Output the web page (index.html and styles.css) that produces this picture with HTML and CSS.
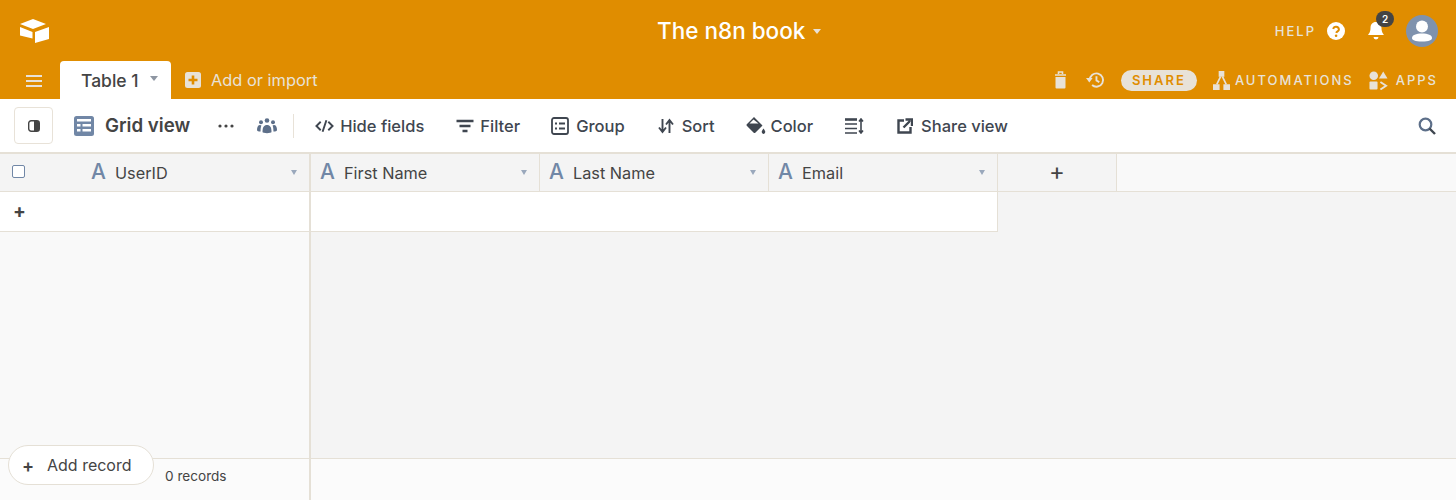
FILE: index.html
```html
<!DOCTYPE html>
<html lang="en">
  <head>
    <meta charset="UTF-8" />
    <meta name="viewport" content="width=device-width, initial-scale=1.0" />
    <title>The n8n book: Table 1</title>
    <link rel="stylesheet" href="styles.css">
  </head>
  <body>
    <div class="app">
      <header class="topbar">
        <div class="top-row">
          <svg class="logo" viewBox="0 0 30 24"><path d="M14 0 27 5 14 10 1 5Z M1 8 13.500 13V19.500L1 16.500Z M30 8V20L16 24V13Z" fill="#fff"/></svg>
          <div class="base-title">The n8n book<span class="caret caret-title"></span></div>
          <div class="top-actions">
            <span class="caps help">HELP</span>
            <svg class="icon-help" viewBox="0 0 18 18"><circle cx="9" cy="9" r="9" fill="#fff"/><path d="M6.200 7a2.900 2.900 0 0 1 5.700.4c0 1.800-2.200 1.900-2.700 3.500" fill="none" stroke="#e08d00" stroke-width="2"/><circle cx="9.100" cy="13.700" r="1.300" fill="#e08d00"/></svg>
            <div class="bell">
              <svg viewBox="0 0 18 20"><path d="M9 1c3.600 0 5.500 2.500 5.500 6 0 4 1.500 5.500 2.500 7H1c1-1.500 2.500-3 2.500-7 0-3.500 1.900-6 5.500-6Z" fill="#fff"/><path d="M6.500 16h5a2.500 2.500 0 0 1-5 0Z" fill="#fff"/></svg>
              <span class="badge">2</span>
            </div>
            <svg class="avatar" viewBox="0 0 32 32"><circle cx="16" cy="16" r="16" fill="#7f92ad"/><circle cx="16" cy="11.500" r="6" fill="#fff"/><path d="M6 23c0-3 4-4.500 10-4.500S26 20 26 23c0 2-3 3.500-10 3.500S6 25 6 23Z" fill="#fff"/></svg>
          </div>
        </div>
        <div class="tab-row">
          <svg class="menu" viewBox="0 0 16 12"><path d="M0 1h16M0 6h16M0 11h16" stroke="#e8e2d8" stroke-width="2"/></svg>
          <div class="tab">Table 1<span class="caret caret-tab"></span></div>
          <div class="add-table">
            <svg viewBox="0 0 16 16"><rect width="16" height="16" rx="2.500" fill="#e8e2d8"/><path d="M8 3.500v9M3.500 8h9" stroke="#e08d00" stroke-width="2.600"/></svg>
            Add or import
          </div>
          <div class="tab-actions">
            <svg class="icon-trash" viewBox="0 0 13 18"><path d="M1 4h11M4.500 3V1h4v2" stroke="#e8e2d8" stroke-width="1.600" fill="none"/><path d="M1.500 6h10v10.500a1 1 0 0 1-1 1h-8a1 1 0 0 1-1-1Z" fill="#e8e2d8"/></svg>
            <svg class="icon-history" viewBox="0 0 20 18"><path d="M4 9a7 7 0 1 1 2.400 5.300" fill="none" stroke="#e8e2d8" stroke-width="2"/><path d="M0 7h7L3.500 11.500Z" fill="#e8e2d8"/><path d="M11 5v4.500l3 1.800" fill="none" stroke="#e8e2d8" stroke-width="2"/></svg>
            <span class="share caps">SHARE</span>
            <span class="caps-item">
              <svg class="icon-auto" viewBox="0 0 18 20"><path d="M6 0h6v6H6ZM0 14h7v6H0ZM11 14h7v6h-7Z" fill="#e8e2d8"/><path d="M8 6 4 14M10 6l4 8" stroke="#e8e2d8" stroke-width="1.800"/></svg>
              <span class="caps">AUTOMATIONS</span>
            </span>
            <span class="caps-item apps">
              <svg class="icon-apps" viewBox="0 0 20 20"><circle cx="5" cy="5" r="4.500" fill="#e8e2d8"/><path d="M15 0.500 19.500 8h-9Z" fill="#e8e2d8"/><rect x="0.500" y="11" width="8.500" height="8.500" rx="1" fill="#e8e2d8"/><path d="M12 11.500 18 15.500 12 19.500" fill="none" stroke="#e8e2d8" stroke-width="2"/></svg>
              <span class="caps">APPS</span>
            </span>
          </div>
        </div>
      </header>

      <div class="toolbar">
        <button class="sidebar-toggle"><svg viewBox="0 0 12 12"><rect x="0.700" y="0.700" width="10.600" height="10.600" rx="2.500" fill="none" stroke="#444" stroke-width="1.400"/><path d="M6 1h3.500a1.500 1.500 0 0 1 1.500 1.500v7A1.500 1.500 0 0 1 9.500 11H6Z" fill="#444"/></svg></button>
        <div class="view-name">
          <svg viewBox="0 0 20 20"><rect width="20" height="20" rx="2.500" fill="#7187a6"/><path d="M3 3h14v2.500H3ZM3 8h3.500v2.500H3ZM8.500 8H17v2.500H8.500ZM3 13h3.500v2.500H3ZM8.500 13H17v2.500H8.500Z" fill="#fff"/></svg>
          Grid view
        </div>
        <svg class="dots" viewBox="0 0 16 4"><circle cx="2" cy="2" r="1.600" fill="#444"/><circle cx="8" cy="2" r="1.600" fill="#444"/><circle cx="14" cy="2" r="1.600" fill="#444"/></svg>
        <svg class="people" viewBox="0 0 20 16"><g fill="#5d6f89"><circle cx="10" cy="2.500" r="2.300"/><circle cx="4" cy="4.200" r="2"/><circle cx="16" cy="4.200" r="2"/><path d="M5.500 14c0-5 1.500-7 4.500-7s4.500 2 4.500 7c0 1.500-9 1.500-9 0Z"/><path d="M0 12c0-3 1-5 3-5 .6 0 1 .2 1.400.5C3.800 9 3.500 11 3.600 13.500 1.500 13.500 0 13 0 12ZM20 12c0-3-1-5-3-5-.6 0-1 .2-1.400.5.6 1.500.9 3.500.8 6 2.100 0 3.600-.5 3.600-1.500Z"/></g></svg>
        <span class="tool-sep"></span>
        <div class="tool tool-hide"><svg viewBox="0 0 20 14"><path d="M6 2.500 1.500 7 6 11.500M14 2.500 18.500 7 14 11.500M12 1 8 13" fill="none" stroke="#3f4650" stroke-width="2"/></svg>Hide fields</div>
        <div class="tool tool-filter"><svg viewBox="0 0 18 14"><path d="M0.500 2h17M3.500 7h11M6.500 12h5" stroke="#3f4650" stroke-width="2.400"/></svg>Filter</div>
        <div class="tool tool-group"><svg viewBox="0 0 18 18"><rect x="1" y="1" width="16" height="16" rx="2" fill="none" stroke="#3f4650" stroke-width="1.800"/><path d="M4 6.500h2M8 6.500h6M4 11.500h2M8 11.500h6" stroke="#3f4650" stroke-width="2"/></svg>Group</div>
        <div class="tool tool-sort"><svg viewBox="0 0 16 16"><path d="M4.500 1v12M1 9.500 4.500 14 8 9.500M11.500 15V3M8 6.500 11.500 2 15 6.500" fill="none" stroke="#3f4650" stroke-width="1.900"/></svg>Sort</div>
        <div class="tool tool-color"><svg viewBox="0 0 20 20"><path d="M8 1 16.500 9.500 9.500 16.500a1.400 1.400 0 0 1-2 0L1 10a1.400 1.400 0 0 1 0-2Z" fill="#3f4650"/><path d="M17.500 12.500c1 1.600 1.800 2.600 1.800 3.600a1.800 1.800 0 0 1-3.600 0c0-1 .8-2 1.800-3.600Z" fill="#3f4650"/><path d="M7.500 3.500 3.500 7.500h9Z" fill="#fff"/></svg>Color</div>
        <div class="tool tool-height"><svg viewBox="0 0 19 16"><path d="M0 1.500h12" stroke="#3f4650" stroke-width="2.600"/><path d="M0 6h12M0 10.500h12M0 15h12" stroke="#3f4650" stroke-width="1.600"/><path d="M16 2v12M14 3.500 16 1l2 2.500M14 12.500 16 15l2-2.500" fill="none" stroke="#3f4650" stroke-width="1.600"/></svg></div>
        <div class="tool tool-share"><svg viewBox="0 0 16 16"><path d="M7 2.500H1.500V14.500H13.500V9" fill="none" stroke="#3f4650" stroke-width="2.400"/><path d="M6.500 9.500 13 3M8.500 1.500H15V8" fill="none" stroke="#3f4650" stroke-width="2.400"/></svg>Share view</div>
        <svg class="search" viewBox="0 0 18 18"><circle cx="7.500" cy="7.500" r="5.800" fill="none" stroke="#5d6f89" stroke-width="2.200"/><path d="M11.500 11.500 17 17" stroke="#3f4650" stroke-width="2.400"/></svg>
      </div>

      <main class="grid-area">
        <section class="pane pane-left">
          <div class="head-row">
            <div class="field field-primary">
              <span class="checkbox"></span>
              <span class="type-a type-primary">A</span>
              <span class="field-name">UserID</span>
              <span class="caret caret-field"></span>
            </div>
          </div>
          <div class="data-row"><span class="row-plus">+</span></div>
          <div class="pane-fill"></div>
          <div class="pane-foot"><span class="count">0 records</span></div>
          <button class="add-record"><span class="add-plus">+</span>Add record</button>
        </section>
        <section class="pane pane-right">
          <div class="head-row">
            <div class="field"><span class="type-a">A</span><span class="field-name">First Name</span><span class="caret caret-field"></span></div>
            <div class="field"><span class="type-a">A</span><span class="field-name">Last Name</span><span class="caret caret-field"></span></div>
            <div class="field"><span class="type-a">A</span><span class="field-name">Email</span><span class="caret caret-field"></span></div>
            <div class="add-field">+</div>
          </div>
          <div class="data-row data-row-right"></div>
          <div class="pane-fill"></div>
          <div class="pane-foot"></div>
        </section>
      </main>
    </div>
  </body>
</html>
```

FILE: styles.css
```css
* {
  box-sizing: border-box;
}

html,
body {
  margin: 0;
  height: 100%;
  overflow: hidden;
}

body {
  font-family: Inter, "Noto Sans", sans-serif;
  color: #3f4650;
  background-color: #f4f4f4;
}

svg {
  display: block;
  flex: none;
}

.app {
  display: flex;
  flex-direction: column;
  height: 500px;
}

/* Top bar */
.topbar {
  height: 99px;
  flex: none;
  background-color: #e08d00;
}

.top-row {
  position: relative;
  display: flex;
  align-items: center;
  height: 61px;
  padding: 0 18px 0 19px;
}

.logo {
  width: 30px;
  height: 24px;
}

.base-title {
  position: absolute;
  left: 657px;
  top: 17px;
  display: flex;
  align-items: center;
  font-size: 22.5px;
  font-weight: 500;
  line-height: 28px;
  color: #fff;
}

.top-actions {
  display: flex;
  align-items: center;
  margin-left: auto;
}

.caps {
  font-size: 13px;
  font-weight: 500;
  letter-spacing: 2px;
  color: #e8e2d8;
}

.help {
  margin-right: 11px;
}

.icon-help {
  width: 18px;
  height: 18px;
  margin-right: 22px;
}

.bell {
  position: relative;
  width: 18px;
  height: 20px;
  margin-right: 21px;
}

.badge {
  position: absolute;
  left: 9px;
  top: -10px;
  width: 18px;
  height: 16px;
  border-radius: 8px;
  background-color: #444;
  color: #fff;
  font-size: 10px;
  font-weight: 600;
  line-height: 16px;
  text-align: center;
}

.avatar {
  width: 32px;
  height: 32px;
}

.tab-row {
  display: flex;
  align-items: stretch;
  height: 38px;
  padding-left: 26px;
  padding-right: 18px;
}

.menu {
  width: 16px;
  height: 12px;
  margin-top: 14px;
  margin-right: 18px;
}

.tab {
  display: flex;
  align-items: center;
  width: 111px;
  padding-left: 21px;
  background-color: #fff;
  border-radius: 4px 4px 0 0;
  font-size: 17.5px;
  font-weight: 500;
  color: #444;
}

.add-table {
  display: flex;
  align-items: center;
  margin-left: 14px;
  gap: 10px;
  font-size: 16.4px;
  color: #e8e2d8;
}

.add-table svg {
  width: 16px;
  height: 16px;
}

.tab-actions {
  display: flex;
  align-items: center;
  margin-left: auto;
}

.icon-trash {
  width: 13px;
  height: 18px;
  margin-right: 19px;
}

.icon-history {
  width: 19px;
  height: 18px;
  margin-right: 16px;
}

.share {
  width: 76px;
  height: 21px;
  margin-right: 16px;
  border-radius: 11px;
  background-color: #e8e2d8;
  color: #e08d00;
  font-weight: 600;
  line-height: 21px;
  text-align: center;
}

.caps-item {
  display: flex;
  align-items: center;
  gap: 5px;
}

.apps {
  margin-left: 15px;
  gap: 8px;
}

.icon-auto {
  width: 17px;
  height: 19px;
}

.icon-apps {
  width: 19px;
  height: 19px;
}

/* View toolbar */
.toolbar {
  display: flex;
  align-items: center;
  height: 53px;
  flex: none;
  padding: 0 20px 0 14px;
  background-color: #fff;
  font-size: 16.5px;
  font-weight: 500;
}

.sidebar-toggle {
  display: flex;
  align-items: center;
  justify-content: center;
  width: 39px;
  height: 37px;
  padding: 0;
  background-color: #fff;
  border: 1px solid #e8e2d8;
  border-radius: 4px;
}

.sidebar-toggle svg {
  width: 12px;
  height: 12px;
}

.view-name {
  display: flex;
  align-items: center;
  gap: 11px;
  margin-left: 21px;
  font-size: 18.7px;
  font-weight: 600;
  color: #444;
}

.view-name svg {
  width: 20px;
  height: 20px;
}

.dots {
  width: 16px;
  height: 4px;
  margin-left: 28px;
}

.people {
  width: 20px;
  height: 16px;
  margin-left: 23px;
}

.tool-sep {
  width: 1px;
  height: 24px;
  margin-left: 16px;
  background-color: #e8e2d8;
}

.tool {
  display: flex;
  align-items: center;
  gap: 6px;
}

.tool-hide {
  margin-left: 21px;
}

.tool-hide svg {
  width: 19px;
  height: 14px;
}

.tool-filter {
  margin-left: 32px;
}

.tool-filter svg {
  width: 18px;
  height: 14px;
}

.tool-group {
  margin-left: 31px;
  gap: 7px;
}

.tool-group svg {
  width: 18px;
  height: 18px;
}

.tool-sort {
  margin-left: 33px;
  gap: 8px;
}

.tool-sort svg {
  width: 16px;
  height: 16px;
}

.tool-color {
  margin-left: 31px;
  gap: 5px;
}

.tool-color svg {
  width: 20px;
  height: 20px;
}

.tool-height {
  margin-left: 32px;
}

.tool-height svg {
  width: 19px;
  height: 16px;
}

.tool-share {
  margin-left: 33px;
  gap: 8px;
}

.tool-share svg {
  width: 16px;
  height: 16px;
}

.search {
  width: 18px;
  height: 18px;
  margin-left: auto;
}

/* Grid */
.grid-area {
  display: flex;
  flex: 1;
  min-height: 0;
  border-top: 2px solid #e5e0d6;
}

.pane {
  display: flex;
  flex-direction: column;
}

.pane-left {
  position: relative;
  width: 311px;
  flex: none;
  background-color: #f9f9f9;
  border-right: 2px solid #e5e0d6;
}

.pane-right {
  flex: 1;
  background-color: #f4f4f4;
}

.head-row {
  display: flex;
  height: 38px;
  flex: none;
  border-bottom: 1px solid #e5e0d6;
  background-color: #f4f4f4;
}

.pane-right .head-row {
  background: linear-gradient(to right, #f4f4f4 806px, #f9f9f9 806px);
}

.field {
  display: flex;
  align-items: center;
  width: 229px;
  height: 37px;
  padding-left: 9px;
  padding-right: 12px;
  border-right: 1px solid #e5e0d6;
  font-size: 16.3px;
  color: #444;
}

.field-primary {
  width: 100%;
  padding-left: 12px;
  padding-right: 12px;
  border-right: 0;
}

.checkbox {
  width: 13px;
  height: 13px;
  margin-right: 66px;
  margin-bottom: 3px;
  background-color: #fff;
  border: 1px solid #7187a6;
  border-radius: 2px;
}

.type-a {
  width: 24px;
  flex: none;
  margin-bottom: 2px;
  font-size: 21px;
  font-weight: 500;
  color: #7187a6;
}

.field-name {
  flex: 1;
}

.add-field {
  width: 119px;
  height: 37px;
  border-right: 1px solid #e5e0d6;
  font-size: 24px;
  line-height: 36px;
  text-align: center;
  color: #444;
}

.data-row {
  display: flex;
  align-items: center;
  height: 40px;
  flex: none;
  background-color: #fff;
  border-bottom: 1px solid #e5e0d6;
}

.data-row-right {
  width: 687px;
  border-right: 1px solid #e5e0d6;
}

.row-plus {
  margin-left: 13px;
  margin-bottom: 1px;
  font-size: 19px;
  font-weight: 700;
  color: #444;
}

.pane-fill {
  flex: 1;
}

.pane-foot {
  display: flex;
  align-items: center;
  height: 42px;
  flex: none;
  background-color: #fbfbfb;
  border-top: 1px solid #e5e0d6;
}

.count {
  margin-left: 165px;
  margin-bottom: 8px;
  font-size: 13.6px;
  color: #444;
}

.add-record {
  position: absolute;
  left: 8px;
  bottom: 15px;
  display: flex;
  align-items: center;
  width: 146px;
  height: 40px;
  padding: 0 0 0 13px;
  background-color: #fff;
  border: 1px solid #e5e0d6;
  border-radius: 20px;
  font-family: inherit;
  font-size: 16px;
  color: #444;
}

.add-plus {
  width: 25px;
  font-size: 18px;
  font-weight: 600;
  text-align: left;
}

/* Dropdown carets */
.caret {
  display: inline-block;
  width: 0;
  height: 0;
  border-style: solid;
  border-color: transparent;
  border-width: 5px 4px 0;
}

.caret-title {
  margin-left: 8px;
  border-top-color: #e8e2d8;
}

.caret-tab {
  margin-left: 11px;
  margin-bottom: 4px;
  border-top-color: #8e96a2;
}

.caret-field {
  border-width: 5px 3.5px 0;
  border-top-color: #9aa8bc;
}
```
